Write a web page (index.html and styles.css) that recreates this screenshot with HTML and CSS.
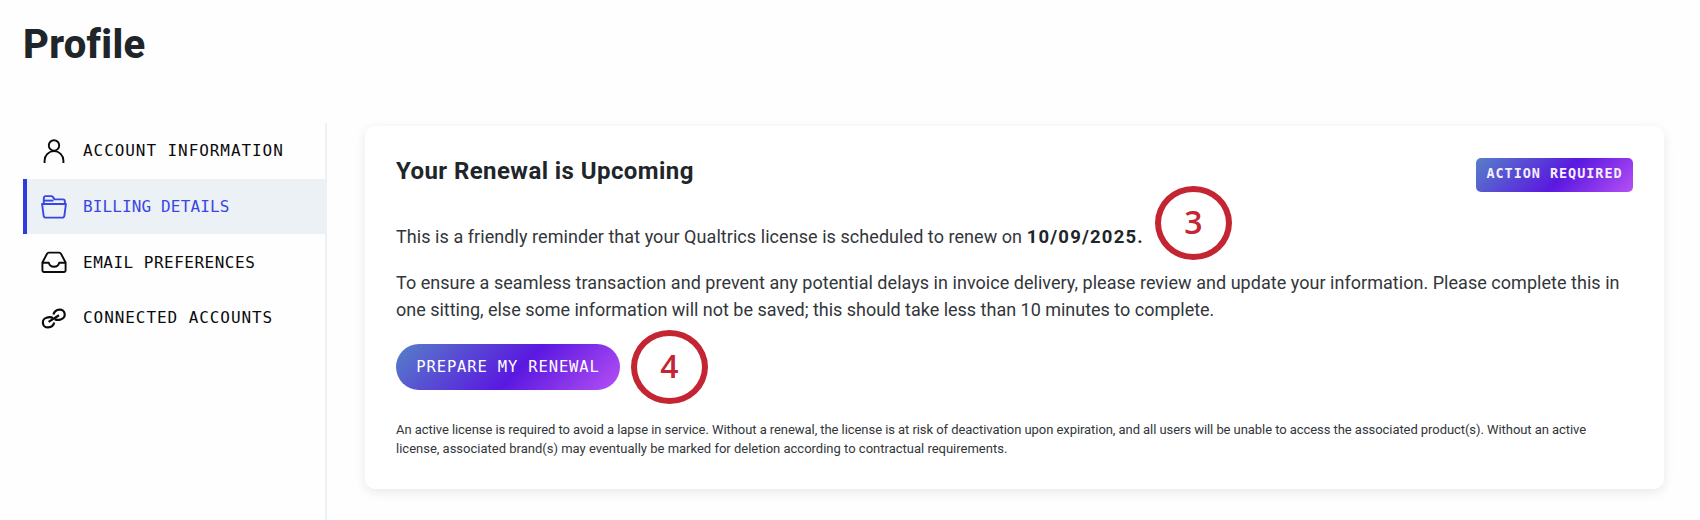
FILE: index.html
```
<!DOCTYPE html>
<html lang="en">
<head>
    <meta charset="UTF-8">
    <meta name="viewport" content="width=device-width, initial-scale=1.0">
    <title>Profile</title>
    <link rel="stylesheet" href="styles.css">
</head>
<body>
    <h1 class="page-title">Profile</h1>

    <div class="layout">
        <nav class="sidebar">
            <a class="nav-item">
                <svg class="nav-icon" viewBox="0 0 28 28">
                    <circle cx="14" cy="8.4" r="5.2" />
                    <path d="M4.6 26v-2.5a9.4 9.4 0 0 1 18.8 0V26" />
                </svg>
                <span>ACCOUNT INFORMATION</span>
            </a>
            <a class="nav-item active">
                <svg class="nav-icon" viewBox="0 0 28 28">
                    <path d="M3.8 11V5.2c0-1.3.8-2.1 2.1-2.1h5.2c.8 0 1.4.3 1.9 1l1.6 2.3h8.2c1.3 0 2.1.7 2.1 2V11" />
                    <path d="M4 7.6h9.5" />
                    <path d="M2.1 11h23.8l-1.5 11.6c-.2 1.4-1 2-2.2 2H5.8c-1.2 0-2-.6-2.2-2z" />
                </svg>
                <span>BILLING DETAILS</span>
            </a>
            <a class="nav-item email">
                <svg class="nav-icon" viewBox="0 0 28 28">
                    <path d="M2.4 14.5 7 5.8c.4-.8.9-1.2 1.8-1.2h10.4c.9 0 1.4.4 1.8 1.2l4.6 8.7v8.1c0 .9-.5 1.4-1.4 1.4H3.8c-.9 0-1.4-.5-1.4-1.4z" />
                    <path d="M2.4 14.8h6.4c.6 2.6 2 4 5.2 4s4.6-1.4 5.2-4h6.4" />
                </svg>
                <span>EMAIL PREFERENCES</span>
            </a>
            <a class="nav-item">
                <svg class="nav-icon link-icon" viewBox="0 0 28 28">
                    <path d="M14.2 18.4c-.6 2.7-3 4.8-6.2 5a4.9 4.9 0 0 1-1.6-9.6c2.4-1 4.5-1.2 6.4.2" />
                    <path d="M13.4 10.6c.6-2.7 3-4.8 6.2-5a4.9 4.9 0 0 1 1.6 9.6c-2.4 1-4.5 1.2-6.4-.2" />
                    <path d="m8.6 17.9 10.4-6.6" />
                </svg>
                <span>CONNECTED ACCOUNTS</span>
            </a>
        </nav>

        <main class="card">
            <div class="card-header">
                <h2 class="card-title">Your Renewal is Upcoming</h2>
                <span class="badge">ACTION REQUIRED</span>
            </div>
            <p class="text">This is a friendly reminder that your Qualtrics license is scheduled to renew on <b class="date">10/09/2025.</b></p>
            <p class="text details">To ensure a seamless transaction and prevent any potential delays in invoice delivery, please review and update your information. Please complete this in<br><span class="details-end">one sitting, else some information will not be saved; this should take less than 10 minutes to complete.</span></p>
            <button class="button">PREPARE MY RENEWAL</button>
            <p class="note">An active license is required to avoid a lapse in service. Without a renewal, the license is at risk of deactivation upon expiration, and all users will be unable to access the associated product(s). Without an active<br><span class="note-end">license, associated brand(s) may eventually be marked for deletion according to contractual requirements.</span></p>

            <!-- numbered step markers -->
            <div class="marker marker-3">3</div>
            <div class="marker marker-4">4</div>
        </main>
    </div>
</body>
</html>
```
FILE: styles.css
```
* {
    box-sizing: border-box;
}

body {
    margin: 0;
    padding: 21px 36px 0 23px;
    height: 520px;
    overflow: hidden;
    display: flex;
    flex-direction: column;
    background-color: #fefefe;
    color: #32363a;
    font-family: Roboto, sans-serif;
}

h1, h2, p {
    margin: 0;
}

.page-title {
    margin-bottom: 54px;
    font-size: 40px;
    font-weight: 800;
    line-height: 48px;
    letter-spacing: 0.3px;
    color: #20252a;
}

.layout {
    flex: 1;
    display: flex;
    align-items: flex-start;
    gap: 38px;
}

.sidebar {
    width: 304px;
    height: 397px;
    border-right: 2px solid #ebf1f4;
}

.nav-item {
    display: flex;
    align-items: center;
    gap: 15px;
    height: 55.7px;
    padding-left: 13px;
    border-left: 4px solid transparent;
    font-family: "DejaVu Sans Mono", monospace;
    font-size: 16px;
    letter-spacing: 0.93px;
    color: #0b0b0d;
}

.nav-item.active {
    background-color: #ebf1f4;
    border-left-color: #2e3be0;
    color: #3a46e4;
    letter-spacing: 0.13px;
}

.nav-item.email {
    letter-spacing: 0.5px;
}

.nav-icon {
    width: 28px;
    height: 28px;
    fill: none;
    stroke: currentColor;
    stroke-width: 1.9;
    stroke-linejoin: round;
}

.link-icon {
    stroke-width: 2.2;
}

.card {
    position: relative;
    flex: 1;
    height: 363px;
    margin-top: 3px;
    padding: 31px 31px 0;
    border-radius: 10px;
    background-color: #fff;
    box-shadow: 0 3px 12px rgba(0, 0, 0, 0.09);
}

.card-header {
    display: flex;
    justify-content: space-between;
    align-items: flex-start;
    height: 66px;
}

.card-title {
    font-size: 24px;
    line-height: 28px;
    letter-spacing: 0.42px;
    color: #20252a;
}

.badge {
    width: 157px;
    height: 34px;
    margin-top: 1px;
    border-radius: 5px;
    background: linear-gradient(135deg, #5680c8, #5a18e0 55%, #b650f5);
    color: #f4f0ff;
    font: bold 13.5px/31px "DejaVu Sans Mono", monospace;
    letter-spacing: 0.95px;
    text-align: center;
}

.text {
    font-size: 18px;
    line-height: 27px;
    letter-spacing: 0.06px;
    white-space: nowrap;
}

.date {
    font-size: 18.5px;
    line-height: 1;
    letter-spacing: 1.2px;
    color: #20252a;
}

.details {
    margin: 19px 0 21px;
    letter-spacing: 0.035px;
}

.details-end {
    letter-spacing: -0.01px;
}

.button {
    display: block;
    width: 224px;
    height: 46px;
    padding: 0;
    border: none;
    border-radius: 23px;
    background: linear-gradient(135deg, #5680c8, #5a18e0 55%, #b650f5);
    color: #fff;
    font: 15.5px "DejaVu Sans Mono", monospace;
    letter-spacing: 0.85px;
    cursor: pointer;
}

.note {
    margin-top: 30px;
    font-size: 13px;
    line-height: 19px;
    letter-spacing: -0.06px;
    white-space: nowrap;
}

.note-end {
    letter-spacing: 0;
}

/* step markers lie over the card */
.marker {
    position: absolute;
    width: 77px;
    height: 74px;
    border: 6px solid #c42532;
    border-radius: 50%;
    color: #c42532;
    font: 600 32px/59px "Open Sans", sans-serif;
    text-align: center;
}

.marker-3 {
    left: 790px;
    top: 60px;
}

.marker-4 {
    left: 266px;
    top: 204px;
}
```
